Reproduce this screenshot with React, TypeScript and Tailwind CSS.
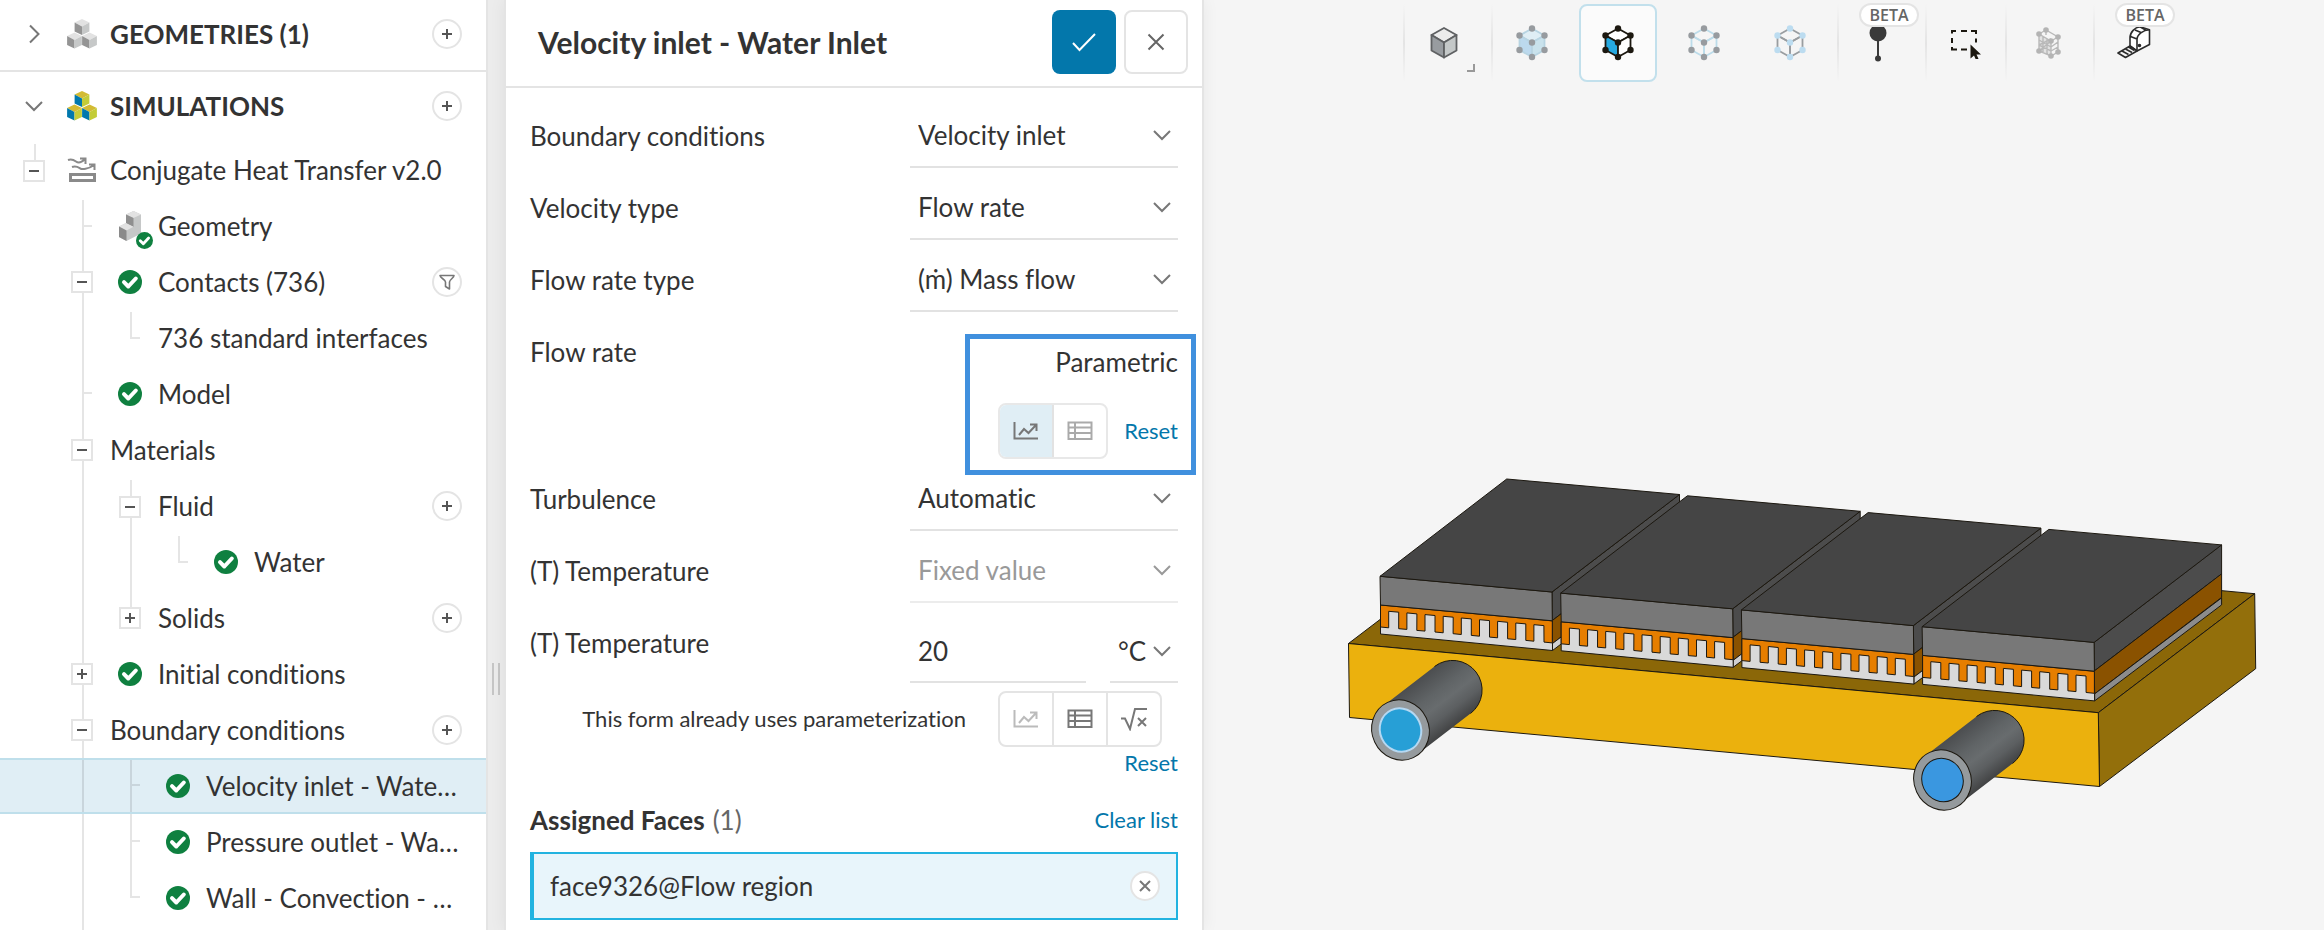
import { useId, useState } from "react";
import type { ReactNode } from "react";

type Guide = "none" | "line" | "tee" | "corner" | "open" | "closed";

interface TreeRow {
  label: string;
  guides: Guide[];
  first?: boolean; // first child of its parent, its guide starts a bit lower
  continues?: boolean; // guide goes on below the toggle box
  icon?: "check" | "geometry" | "flow";
  action?: "add" | "filter";
  selected?: boolean;
}

const TREE: TreeRow[] = [
  { label: "Conjugate Heat Transfer v2.0", guides: ["open"], first: true, icon: "flow" },
  { label: "Geometry", guides: ["none", "tee"], first: true, icon: "geometry" },
  { label: "Contacts (736)", guides: ["none", "open"], continues: true, icon: "check", action: "filter" },
  { label: "736 standard interfaces", guides: ["none", "line", "corner"], first: true },
  { label: "Model", guides: ["none", "tee"], icon: "check" },
  { label: "Materials", guides: ["none", "open"], continues: true },
  { label: "Fluid", guides: ["none", "line", "open"], first: true, continues: true, action: "add" },
  { label: "Water", guides: ["none", "line", "line", "corner"], first: true, icon: "check" },
  { label: "Solids", guides: ["none", "line", "closed"], action: "add" },
  { label: "Initial conditions", guides: ["none", "closed"], continues: true, icon: "check" },
  { label: "Boundary conditions", guides: ["none", "open"], continues: true, action: "add" },
  { label: "Velocity inlet - Wate…", guides: ["none", "line", "tee"], icon: "check", selected: true },
  { label: "Pressure outlet - Wa…", guides: ["none", "line", "tee"], icon: "check" },
  { label: "Wall - Convection - …", guides: ["none", "line", "corner"], icon: "check" },
];

/* ---------- small icons ---------- */

function CheckBadge({ size }: { size: number }) {
  return (
    <svg width={size} height={size} viewBox="0 0 24 24" aria-hidden="true">
      <circle cx="12" cy="12" r="12" fill="#0f8040" />
      <path d="M6 12.2l4.3 4.3 7.5-8" fill="none" stroke="#fff" strokeWidth="4" strokeLinecap="round" strokeLinejoin="round" />
    </svg>
  );
}

function Cube({ x, y, top, left, right }: { x: number; y: number; top: string; left: string; right: string }) {
  return (
    <g transform={`translate(${x} ${y})`}>
      <path d="M0-8l7.4 3.6L0-.6l-7.4-3.8z" fill={top} />
      <path d="M-7.4-4.4L0-.6V8l-7.4-3.6z" fill={left} />
      <path d="M7.4-4.4L0-.6V8l7.4-3.6z" fill={right} />
    </g>
  );
}

function CubesIcon({ color = false }: { color?: boolean }) {
  const faces = color
    ? { top: "#d3bb33", left: "#0078ad", right: "#c3cc38" }
    : { top: "#e2e2e2", left: "#949494", right: "#c6c8c8" };
  return (
    <svg width="30" height="30" viewBox="0 0 30 30" aria-hidden="true">
      <Cube x={15} y={8} {...faces} />
      <Cube x={7.5} y={21.5} {...faces} />
      <Cube x={22.5} y={21.5} {...faces} />
    </svg>
  );
}

function GeometryIcon() {
  return (
    <span className="relative block h-[30px] w-[30px]">
      <svg width="30" height="30" viewBox="0 0 30 30" aria-hidden="true">
        <path d="M11 3.5L18.5 0 26 3.5v19L11.500 30 4 26V15.500l7-3.500z" fill="#c6c8c8" />
        <path d="M11 3.5L18.5 0 26 3.5 18.5 7z" fill="#e2e2e2" />
        <path d="M11 3.5L18.5 7v9L11 12.500z" fill="#8f8f8f" />
        <path d="M4 15.500L11 12l7.500 3.800-7 3.700z" fill="#e2e2e2" />
        <path d="M4 15.500l7.500 4V30L4 26z" fill="#8a8a8a" />
      </svg>
      <span className="absolute -bottom-2 -right-2">
        <CheckBadge size={17} />
      </span>
    </span>
  );
}

function FlowIcon() {
  return (
    <svg width="30" height="26" viewBox="0 0 30 26" fill="none" stroke="#8a8a8a" strokeWidth="2" aria-hidden="true">
      <path d="M1 3c4-1.500 6 0 8 1.500s5 1.500 9-2.500M13 1.500h5.500V7M5 10c4-1.500 6 0 8 1.300s8 1.200 14-3.300M22 7.500h5.500V13" />
      <path d="M3.500 17.500h24v6h-24z" strokeWidth="3" />
    </svg>
  );
}

function Chevron({ dir = "down", color = "#777" }: { dir?: "down" | "right"; color?: string }) {
  return (
    <svg width="20" height="20" viewBox="0 0 20 20" fill="none" stroke={color} strokeWidth="2" aria-hidden="true">
      {dir === "down" ? <path d="M2 6l8 8 8-8" /> : <path d="M6 1.500l8.500 8.500L6 18.500" />}
    </svg>
  );
}

function RoundButton({ label, children }: { label: string; children: ReactNode }) {
  return (
    <button
      type="button"
      aria-label={label}
      className="flex h-[30px] w-[30px] shrink-0 items-center justify-center rounded-full border-2 border-[#e4e4e4] bg-white"
    >
      {children}
    </button>
  );
}

function PlusIcon() {
  return (
    <svg width="10" height="10" viewBox="0 0 10 10" stroke="#555" strokeWidth="2" aria-hidden="true">
      <path d="M5 0v10M0 5h10" />
    </svg>
  );
}

function FunnelIcon() {
  return (
    <svg width="16" height="16" viewBox="0 0 16 16" fill="none" stroke="#777" strokeWidth="1.6" strokeLinejoin="round" aria-hidden="true">
      <path d="M1 1.500h14c0 2.500-4.500 4-4.500 6.500v7l-4-2.500V8C6.500 5.500 1 4 1 1.500z" />
    </svg>
  );
}

function ChartIcon({ color }: { color: string }) {
  return (
    <svg width="26" height="20" viewBox="0 0 26 20" fill="none" stroke={color} strokeWidth="2" aria-hidden="true">
      <path d="M1.500 1v16.500H25" />
      <path d="M6 14l5-6 4.500 4L23 4M17 3.500h6.500V10" />
    </svg>
  );
}

function TableIcon({ color }: { color: string }) {
  return (
    <svg width="26" height="20" viewBox="0 0 26 20" fill="none" stroke={color} strokeWidth="2" aria-hidden="true">
      <path d="M1.500 1.500h23v16.500h-23zM1.500 6.500h23M1.500 12h23M8 1.500v16.500" />
    </svg>
  );
}

function RootIcon() {
  return (
    <svg width="28" height="24" viewBox="0 0 28 24" fill="none" stroke="#777" strokeWidth="2" aria-hidden="true">
      <path d="M1 11.500h4l5 10.500L15 2h12M18 11l8 8M26 11l-8 8" />
    </svg>
  );
}

/* ---------- project tree ---------- */

function GuideCell({ kind, first, continues }: { kind: Guide; first?: boolean; continues?: boolean }) {
  if (kind === "none") return <span className="w-12 shrink-0" />;
  if (kind === "line") {
    return (
      <span className="flex w-12 shrink-0 self-stretch pl-6">
        <span className="w-0.5 bg-black/10" />
      </span>
    );
  }
  if (kind === "tee" || kind === "corner") {
    return (
      <span className={`flex w-12 shrink-0 flex-col self-stretch pl-6 ${first ? "pt-0.5" : ""}`}>
        <span className="flex flex-1 items-end">
          <span className="w-0.5 self-stretch bg-black/10" />
          <span className="h-0.5 w-2 bg-black/10" />
        </span>
        <span className={`w-0.5 flex-1 ${kind === "tee" ? "bg-black/10" : ""}`} />
      </span>
    );
  }
  return (
    <span className={`flex w-12 shrink-0 flex-col self-stretch ${first ? "pt-0.5" : ""}`}>
      <span className="ml-6 w-0.5 flex-1 bg-black/10" />
      <button
        type="button"
        aria-label={kind === "open" ? "Collapse" : "Expand"}
        className="flex h-[22px] w-[22px] items-center justify-center self-center border-2 border-[#e4e4e4] bg-white"
      >
        <svg width="10" height="10" viewBox="0 0 10 10" stroke="#555" strokeWidth="2" aria-hidden="true">
          <path d={kind === "open" ? "M0 5h10" : "M5 0v10M0 5h10"} />
        </svg>
      </button>
      <span className={`ml-6 w-0.5 flex-1 ${continues ? "bg-black/10" : ""}`} />
    </span>
  );
}

function SidebarRow({ row }: { row: TreeRow }) {
  return (
    <li
      className={`flex h-14 items-center border-[#bfdfeb] pl-[10px] pr-6 ${
        row.selected ? "border-y-2 bg-[#e0eef5]" : ""
      }`}
    >
      {row.guides.map((kind, i) => {
        const own = i === row.guides.length - 1;
        return <GuideCell key={i} kind={kind} first={own && row.first} continues={own && row.continues} />;
      })}
      {row.icon && (
        <span className="flex w-12 shrink-0 justify-center">
          {row.icon === "check" && <CheckBadge size={24} />}
          {row.icon === "geometry" && <GeometryIcon />}
          {row.icon === "flow" && <FlowIcon />}
        </span>
      )}
      <span className="flex-1 whitespace-nowrap pl-1">{row.label}</span>
      {row.action && (
        <RoundButton label={row.action === "add" ? `Add to ${row.label}` : `Filter ${row.label}`}>
          {row.action === "add" ? <PlusIcon /> : <FunnelIcon />}
        </RoundButton>
      )}
    </li>
  );
}

function Sidebar() {
  return (
    <nav className="flex w-[488px] shrink-0 flex-col border-r-2 border-[#e4e4e4] bg-white">
      <div className="flex h-[72px] shrink-0 items-center border-b-2 border-[#e4e4e4] pb-0.5 pl-[10px] pr-6">
        <button type="button" aria-label="Expand geometries" className="flex w-12 justify-center">
          <Chevron dir="right" />
        </button>
        <span className="flex w-12 justify-center">
          <CubesIcon />
        </span>
        <h2 className="flex-1 pl-1 font-bold">GEOMETRIES (1)</h2>
        <RoundButton label="Add geometry">
          <PlusIcon />
        </RoundButton>
      </div>
      <div className="flex h-[70px] shrink-0 items-center pb-0.5 pl-[10px] pr-6">
        <button type="button" aria-label="Collapse simulations" className="flex w-12 justify-center">
          <Chevron />
        </button>
        <span className="flex w-12 justify-center">
          <CubesIcon color />
        </span>
        <h2 className="flex-1 pl-1 font-bold">SIMULATIONS</h2>
        <RoundButton label="Add simulation">
          <PlusIcon />
        </RoundButton>
      </div>
      <ul>
        {TREE.map((row) => (
          <SidebarRow key={row.label} row={row} />
        ))}
      </ul>
      <div className="flex flex-1 pl-[82px]">
        <span className="w-0.5 bg-black/10" />
      </div>
    </nav>
  );
}

/* ---------- settings form ---------- */

interface SelectRowProps {
  label: string;
  value: string;
  disabled?: boolean;
}

function SelectRow({ label, value, disabled = false }: SelectRowProps) {
  const id = useId();
  return (
    <div className="flex h-[72px] items-stretch justify-between">
      <label htmlFor={id} className="pt-6">
        {label}
      </label>
      <div
        className={`grid w-[268px] items-center border-b-2 pb-2 pt-4 ${
          disabled ? "border-[#ececec] text-[#999]" : "border-[#e2e2e2]"
        }`}
      >
        <select
          id={id}
          disabled={disabled}
          className="h-full w-full appearance-none bg-transparent pl-2 opacity-100 outline-none [grid-area:1/1]"
        >
          <option>{value}</option>
        </select>
        <span className="pointer-events-none justify-self-end pr-1.5 [grid-area:1/1]">
          <Chevron color={disabled ? "#999" : "#777"} />
        </span>
      </div>
    </div>
  );
}

function SettingsPanel() {
  const [temperature, setTemperature] = useState("20");

  return (
    <section className="flex w-[700px] shrink-0 flex-col border-x-2 border-[#e4e4e4] bg-white shadow-[0_0_16px_rgba(0,0,0,0.06)]">
      <header className="flex h-[88px] shrink-0 items-center gap-2 border-b-2 border-[#e4e4e4] pb-0.5 pl-8 pr-3.5">
        <h1 className="flex-1 text-[30px] font-bold">Velocity inlet - Water Inlet</h1>
        <button
          type="button"
          aria-label="Apply"
          className="flex h-16 w-16 items-center justify-center rounded-lg bg-[#0377ab]"
        >
          <svg width="24" height="20" viewBox="0 0 24 20" fill="none" stroke="#fff" strokeWidth="2" aria-hidden="true">
            <path d="M1 11l6.500 7L23 2" />
          </svg>
        </button>
        <button
          type="button"
          aria-label="Close"
          className="flex h-16 w-16 items-center justify-center rounded-lg border-2 border-[#e4e4e4]"
        >
          <svg width="18" height="18" viewBox="0 0 18 18" stroke="#666" strokeWidth="2" aria-hidden="true">
            <path d="M1.500 1.500l15 15M16.500 1.500l-15 15" />
          </svg>
        </button>
      </header>

      <form className="px-6 pt-2" onSubmit={(e) => e.preventDefault()}>
        <SelectRow label="Boundary conditions" value="Velocity inlet" />
        <SelectRow label="Velocity type" value="Flow rate" />
        <SelectRow label="Flow rate type" value="(ṁ) Mass flow" />

        {/* Flow rate */}
        <div className="relative flex h-[147px] justify-between">
          <span className="pt-6">Flow rate</span>
          <div className="flex flex-col items-end justify-between pt-[34px]">
            <span>Parametric</span>
            <div className="flex items-center gap-4">
              <div className="flex h-14 overflow-hidden rounded-lg border-2 border-[#e8e8e8]">
                <button type="button" aria-label="Parametric values" className="flex w-[54px] items-center justify-center border-r-2 border-[#e2e2e2] bg-[#e0eef5]">
                  <ChartIcon color="#777" />
                </button>
                <button type="button" aria-label="Table values" className="flex w-[52px] items-center justify-center">
                  <TableIcon color="#aaa" />
                </button>
              </div>
              <a href="#reset-flow-rate" className="text-[22px] text-[#0377ab]">
                Reset
              </a>
            </div>
          </div>
          <div className="pointer-events-none absolute -bottom-4 -right-[18px] h-[141px] w-[231px] border-[5px] border-[#4090de]" />
        </div>

        <SelectRow label="Turbulence" value="Automatic" />
        <SelectRow label="(T) Temperature" value="Fixed value" disabled />

        {/* Temperature value */}
        <div className="flex h-20 items-stretch justify-between">
          <label htmlFor="temperature" className="pt-6">
            (T) Temperature
          </label>
          <div className="flex w-[268px] justify-between">
            <input
              id="temperature"
              value={temperature}
              onChange={(e) => setTemperature(e.target.value)}
              className="w-44 border-b-2 border-[#e2e2e2] pl-2 pt-[18px] outline-none"
            />
            <div className="grid w-[68px] items-center border-b-2 border-[#e2e2e2] pt-[18px]">
              <select aria-label="Temperature unit" className="w-full appearance-none bg-transparent pl-2 outline-none [grid-area:1/1]">
                <option>°C</option>
              </select>
              <span className="pointer-events-none justify-self-end pr-1.5 [grid-area:1/1]">
                <Chevron />
              </span>
            </div>
          </div>
        </div>
        <div className="flex items-center justify-end gap-8 pr-4 pt-2">
          <span className="text-[22px]">This form already uses parameterization</span>
          <div className="flex h-14 rounded-lg border-2 border-[#e4e4e4]">
            <button type="button" disabled aria-label="Parametric temperature" className="flex w-[54px] items-center justify-center border-r-2 border-[#e4e4e4]">
              <ChartIcon color="#bbb" />
            </button>
            <button type="button" aria-label="Temperature table" className="flex w-[54px] items-center justify-center border-r-2 border-[#e4e4e4]">
              <TableIcon color="#777" />
            </button>
            <button type="button" aria-label="Temperature formula" className="flex w-[52px] items-center justify-center">
              <RootIcon />
            </button>
          </div>
        </div>
        <div className="flex justify-end">
          <a href="#reset-temperature" className="text-[22px] text-[#0377ab]">
            Reset
          </a>
        </div>

        {/* Assigned faces */}
        <div className="flex h-[73px] items-center pt-2">
          <h2 className="font-bold">Assigned Faces</h2>
          <span className="flex-1 pl-2 text-[#666]">(1)</span>
          <a href="#clear" className="text-[22px] text-[#0377ab]">
            Clear list
          </a>
        </div>
        <div className="flex h-[68px] items-center justify-between border-2 border-l-4 border-[#22b3e0] bg-[#e8f5fb] pl-4 pr-4">
          <span>face9326@Flow region</span>
          <RoundButton label="Remove face9326@Flow region">
            <svg width="12" height="12" viewBox="0 0 12 12" stroke="#777" strokeWidth="2" aria-hidden="true">
              <path d="M1 1l10 10M11 1L1 11" />
            </svg>
          </RoundButton>
        </div>
      </form>
    </section>
  );
}

/* ---------- viewer toolbar ---------- */

interface NodeCubeProps {
  edge: string;
  dot: string;
  top?: string;
  left?: string;
  right?: string;
}

function NodeCube({ edge, dot, top = "none", left = "none", right = "none" }: NodeCubeProps) {
  const dots = [[16, 3.5], [3.5, 10.5], [28.5, 10.5], [16, 17.5], [3.5, 25], [28.5, 25], [16, 32]];
  return (
    <svg width="32" height="36" viewBox="0 0 32 36" aria-hidden="true">
      <g stroke={edge} strokeWidth="1.8">
        <path d="M16 3.500l12.500 7L16 17.500l-12.500-7z" fill={top} />
        <path d="M3.500 10.500l12.500 7V32L3.500 25z" fill={left} />
        <path d="M28.500 10.500L16 17.500V32l12.500-7z" fill={right} />
      </g>
      {dots.map(([x, y]) => (
        <circle key={`${x}-${y}`} cx={x} cy={y} r="3.2" fill={dot} />
      ))}
    </svg>
  );
}

function ShadedCube() {
  return (
    <svg width="30" height="34" viewBox="0 0 30 34" stroke="#5f6163" strokeWidth="1.8" strokeLinejoin="round" aria-hidden="true">
      <path d="M15 2l12.500 7L15 16.500 2.500 9z" fill="#ececec" />
      <path d="M2.500 9L15 16.500V31.500L2.500 24.500z" fill="#989ca0" />
      <path d="M27.500 9L15 16.500V31.500l12.500-7z" fill="#c4c8c8" />
    </svg>
  );
}

function ProbeIcon() {
  return (
    <svg width="18" height="38" viewBox="0 0 18 38" fill="#3a3a3a" aria-hidden="true">
      <circle cx="9" cy="9" r="8.5" />
      <circle cx="9" cy="34.5" r="3" />
      <path d="M8 9h2v25H8z" />
    </svg>
  );
}

function BoxSelectIcon() {
  return (
    <svg width="32" height="32" viewBox="0 0 32 32" aria-hidden="true">
      <path
        d="M2 6.500V4h4M11 4h6M21 4h5v3M2 11v5M2 20v2.500h5M11 22.500h6M26 11.500v4"
        fill="none"
        stroke="#1c1810"
        strokeWidth="2"
      />
      <path d="M20.500 17.500v14l3.500-3 2 4.500 2.500-1.200-2-4.300h4.500z" fill="#1c1810" />
    </svg>
  );
}

function MeshIcon() {
  const dots = [[10, 3], [3, 7], [22, 10], [15, 14], [3, 24], [22, 25], [15, 29]];
  return (
    <svg width="25" height="32" viewBox="0 0 25 32" aria-hidden="true">
      <path d="M3 7l12 7v15L3 24z" fill="#e2e2e2" />
      <path
        d="M3 7l7-4 12 7-7 4zM3 7v17l12 5 7-4V10M15 14v15M7 9v17M11 12v16M3 13l12 7 7-5M3 18l12 6 7-4M3 24l12-10M10 3v5M3 18l12-6"
        fill="none"
        stroke="#b9b9b9"
        strokeWidth="1.4"
      />
      {dots.map(([x, y]) => (
        <circle key={`${x}-${y}`} cx={x} cy={y} r="2.8" fill="#b4b4b4" />
      ))}
    </svg>
  );
}

// tape measure, housing on the right and the pulled out tape on the left
function TapeIcon() {
  return (
    <svg width="34" height="34" viewBox="0 0 34 34" fill="none" stroke="#2b2b2b" strokeWidth="1.6" strokeLinejoin="round" aria-hidden="true">
      <path d="M13 20v-8C13 6 18 1.500 23 .8l9.500 3V18.500L20 25z" fill="#fff" />
      <path d="M20 25V13.500C20 8.500 26 4 32.500 3.800M13.500 10.500l6.500 2.500M18 4l6 2.500M23 .8l6 3.500" />
      <path d="M13 20L1 27l7.500 4.500L20 25z" fill="#f5f5f5" />
      <path d="M5 25l6.500 3.500M8.500 23l6.500 3.500M11.500 21l6 3.500" />
      <circle cx="22.5" cy="19.5" r="1" fill="#2b2b2b" />
    </svg>
  );
}

function ToolButton({ label, active, beta, children }: { label: string; active?: boolean; beta?: boolean; children: ReactNode }) {
  return (
    <button
      type="button"
      aria-label={label}
      className={`relative flex h-[78px] w-[78px] shrink-0 items-center justify-center rounded-lg border-2 ${
        active ? "border-[#c2e0ec] bg-[#fbfbfb]" : "border-transparent"
      }`}
    >
      {children}
      {beta && (
        <span className="absolute -top-[3px] left-[18px] flex h-6 w-[60px] items-center justify-center rounded-full border-2 border-[#e4e4e4] bg-white font-['Open_Sans',sans-serif] text-base font-semibold text-[#666]">
          BETA
        </span>
      )}
    </button>
  );
}

function Divider() {
  return <span className="h-[78px] w-0.5 shrink-0 bg-gradient-to-b from-transparent via-[#e4e4e4] to-transparent" />;
}

function Toolbar() {
  return (
    <div role="toolbar" aria-label="Viewer tools" className="flex h-[88px] shrink-0 items-start justify-center pl-12 pt-1">
      <Divider />
      <ToolButton label="Render mode">
        <ShadedCube />
        <span className="absolute bottom-2 right-1.5 h-2 w-2 border-b-2 border-r-2 border-[#999]" />
      </ToolButton>
      <span className="w-2" />
      <Divider />
      <div className="flex gap-2 pr-2">
        <ToolButton label="Select volumes">
          <NodeCube edge="#b7d4e2" dot="#979b9f" top="#dfeef5" left="#bcd9ee" right="#c9e2ec" />
        </ToolButton>
        <ToolButton label="Select faces" active>
          <NodeCube edge="#1c1810" dot="#1c1810" left="#26a9e0" top="#fff" right="#fff" />
        </ToolButton>
        <ToolButton label="Select edges">
          <NodeCube edge="#bcdcea" dot="#979b9f" />
        </ToolButton>
        <ToolButton label="Select vertices">
          <NodeCube edge="#999da0" dot="#bcdcf0" />
        </ToolButton>
      </div>
      <Divider />
      <ToolButton label="Probe point" beta>
        <ProbeIcon />
      </ToolButton>
      <span className="w-2" />
      <Divider />
      <ToolButton label="Box selection">
        <BoxSelectIcon />
      </ToolButton>
      <Divider />
      <span className="w-0.5" />
      <ToolButton label="Mesh clip">
        <MeshIcon />
      </ToolButton>
      <span className="w-1.5" />
      <Divider />
      <ToolButton label="Measure" beta>
        <TapeIcon />
      </ToolButton>
    </div>
  );
}

/* ---------- 3D model ---------- */

const TOOTH_PITCH = 18.15;
const SLOPE = 0.0925;

// front outline of the orange layer: a strip with ten teeth hanging from it
function combPath() {
  const at = (x: number, y: number) => `${x.toFixed(1)} ${(y + (x - 1380.5) * SLOPE).toFixed(1)}`;
  const pts = [at(1380.5, 605), at(1552.3, 605), at(1552.3, 627), at(1544, 627)];
  for (let i = 8; i >= 0; i--) {
    const slot = 1388.7 + i * TOOTH_PITCH;
    pts.push(at(slot + 10, 610.5), at(slot, 610.5), at(slot, 627));
    // bottom right corner of the next tooth over
    if (i > 0) pts.push(at(slot - TOOTH_PITCH + 10, 627));
  }
  pts.push(at(1380.5, 627));
  return `M${pts.join("L")}Z`;
}

const COMB = combPath();

function Module({ index }: { index: number }) {
  const last = index === 3;
  return (
    <g transform={`translate(${index * 180.7} ${index * 16.8})`}>
      {/* right side */}
      <path d="M1552 592l127.500-97.500v29L1552.300 620.500z" fill="#4c4c4c" />
      <path d="M1552.300 620.500l127.200-97v23.500L1552.500 643.500z" fill="#8a5200" />
      <path d="M1552.500 643.500l127-96v7L1552.500 650.500z" fill={last ? "#8c8c8c" : "#d0d0d0"} />
      {/* front */}
      <path d="M1380.500 605l171.800 16 .2 29.500-172-16.500z" fill="#d9d9d9" />
      <path d={COMB} fill="#e67e00" />
      <path d="M1380 576.300L1552 592l.3 28.800-171.800-15.800z" fill="#787878" />
      {/* top */}
      <path d="M1380 576.300L1506.700 479l172.800 15.500L1552 592z" fill="#454545" />
    </g>
  );
}

function Pipe({ x, y, plain }: { x: number; y: number; plain?: boolean }) {
  return (
    <g transform={`translate(${x} ${y})`}>
      <path d="M-18-23.500L34-63.500A29.600 29.600 0 0 1 70-16.500L18 23.500z" fill="url(#pipe)" stroke="none" />
      <path d="M34-63.500A29.600 29.600 0 0 1 70-16.500" fill="none" />
      <ellipse rx="28.5" ry="30.5" transform="rotate(-25)" fill="#959a9d" />
      <ellipse
        rx="20.5"
        ry="22"
        transform="rotate(-25)"
        fill={plain ? "#3a97e0" : "#279fd6"}
        stroke={plain ? "#1c1810" : "#b5d8f2"}
        strokeWidth={plain ? 1 : 2}
      />
    </g>
  );
}

function Scene() {
  return (
    <svg
      viewBox="1204 88 1120 842"
      role="img"
      aria-label="Cooling plate with four modules"
      className="min-h-0 w-full flex-1"
    >
      <defs>
        <linearGradient id="pipe" gradientUnits="userSpaceOnUse" x1="8" y1="-43" x2="44" y2="4">
          <stop offset="0" stopColor="#4c4e50" />
          <stop offset="0.35" stopColor="#606466" />
          <stop offset="0.55" stopColor="#686c6e" />
          <stop offset="0.75" stopColor="#5c5f61" />
          <stop offset="1" stopColor="#414243" />
        </linearGradient>
      </defs>
      <g stroke="#1c1810" strokeWidth="1" strokeLinejoin="round">
        <path d="M1348.500 643.500L1504.900 524.500l749.800 69.200-156.400 119z" fill="#8b6708" />
        <path d="M2098.300 712.700l156.400-119 1 75-156.200 117.800z" fill="#936f0b" />
        <path d="M1348.500 643.500l749.800 69.200 1.200 73.800-750-69z" fill="#ebb10d" />
        {[0, 1, 2, 3].map((i) => (
          <Module key={i} index={i} />
        ))}
        <Pipe x={1400.5} y={730} />
        <Pipe x={1942.5} y={780} plain />
      </g>
    </svg>
  );
}

export default function App() {
  return (
    <div className="flex h-screen overflow-hidden bg-[#f5f5f5] font-['Lato',sans-serif] text-[26px] leading-8 text-[#333] [font-variant-ligatures:none]">
      <Sidebar />
      <div className="flex w-4 shrink-0 items-center justify-center gap-1 bg-[#ececec] pt-[428px]">
        <span className="h-8 w-0.5 bg-[#c6c6c6]" />
        <span className="h-8 w-0.5 bg-[#c6c6c6]" />
      </div>
      <SettingsPanel />
      <main className="flex min-w-0 flex-1 flex-col">
        <Toolbar />
        <Scene />
      </main>
    </div>
  );
}
